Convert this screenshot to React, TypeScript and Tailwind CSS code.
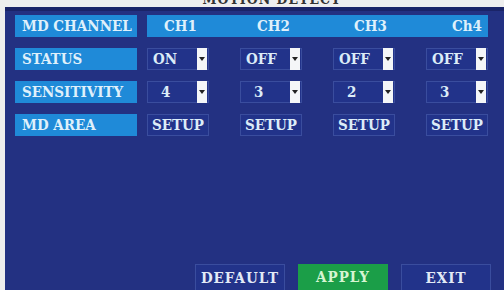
const font = { fontFamily: '"DejaVu Serif Condensed", "DejaVu Serif", "Liberation Serif", serif', fontStretch: 'condensed' as const };

function Label({ text }: { text: string }) {
  return (
    <div className="flex h-[22px] w-[122px] items-center whitespace-nowrap bg-[#1f8ad8] pl-[7px] text-[15px] font-bold text-[#dff0fb]">
      {text}
    </div>
  );
}

function Select({ value, pad }: { value: string; pad: string }) {
  return (
    <div className="flex h-[22px] w-[62px] items-stretch border border-[#3a4d9e] bg-[#22338a]">
      <span className={`flex flex-1 items-center text-[15px] font-bold text-[#dcecf8] ${pad}`}>{value}</span>
      <span className="my-[-1px] mr-[1px] flex w-[10px] items-center justify-center bg-[#f4f6f8]">
        <svg width="6" height="4" viewBox="0 0 6 4">
          <path d="M0 0 L6 0 L3 4 Z" fill="#222" />
        </svg>
      </span>
    </div>
  );
}

function Setup() {
  return (
    <div className="flex h-[22px] w-[62px] items-center justify-center border border-[#3a4d9e] bg-[#22338a] text-[15px] font-bold text-[#dcecf8]">
      SETUP
    </div>
  );
}

function Button({ text, green }: { text: string; green?: boolean }) {
  return (
    <div
      className={`flex h-[32px] w-[90px] items-start justify-center pt-[2px] text-[15px] font-bold tracking-[1px] ${
        green
          ? 'bg-[#1b9e48] text-[#d6f5d2]'
          : 'border border-[#3a4d9e] bg-[#22338a] text-[#e2eaf6]'
      }`}
    >
      {text}
    </div>
  );
}

export default function App() {
  const status = ['ON', 'OFF', 'OFF', 'OFF'];
  const sens = ['4', '3', '2', '3'];
  return (
    <div className="flex h-[290px] w-[504px] flex-col overflow-hidden bg-[#eeeeee]" style={font}>
      <div className="flex h-[7px] justify-center overflow-hidden">
        <span className="mt-[-8px] whitespace-nowrap pl-[40px] text-[14px] font-bold leading-none text-[#333] tracking-[1px]">
          MOTION DETECT
        </span>
      </div>
      <div className="ml-[5px] flex flex-1 flex-col border-t-[4px] border-[#1a2468] bg-[#233182] pl-[10px] pt-[4px]">
        <div className="flex flex-col gap-[11px]">
          <div className="flex gap-[10px]">
            <Label text="MD CHANNEL" />
            <div className="flex h-[22px] w-[341px] items-center bg-[#1f8ad8] text-[15px] font-bold text-[#dff0fb]">
              <span className="ml-[17px] w-[93px]">CH1</span>
              <span className="w-[97px]">CH2</span>
              <span className="w-[98px]">CH3</span>
              <span>Ch4</span>
            </div>
          </div>
          <div className="flex gap-[10px]">
            <Label text="STATUS" />
            <div className="flex gap-[31px]">
              {status.map((s, i) => (
                <Select key={i} value={s} pad="pl-[5px]" />
              ))}
            </div>
          </div>
          <div className="flex gap-[10px]">
            <Label text="SENSITIVITY" />
            <div className="flex gap-[31px]">
              {sens.map((s, i) => (
                <Select key={i} value={s} pad="pl-[13px]" />
              ))}
            </div>
          </div>
          <div className="flex gap-[10px]">
            <Label text="MD AREA" />
            <div className="flex gap-[31px]">
              {[0, 1, 2, 3].map((i) => (
                <Setup key={i} />
              ))}
            </div>
          </div>
        </div>
        <div className="mt-auto flex translate-y-[6px] gap-[13px] pl-[180px]">
          <Button text="DEFAULT" />
          <Button text="APPLY" green />
          <Button text="EXIT" />
        </div>
      </div>
    </div>
  );
}
